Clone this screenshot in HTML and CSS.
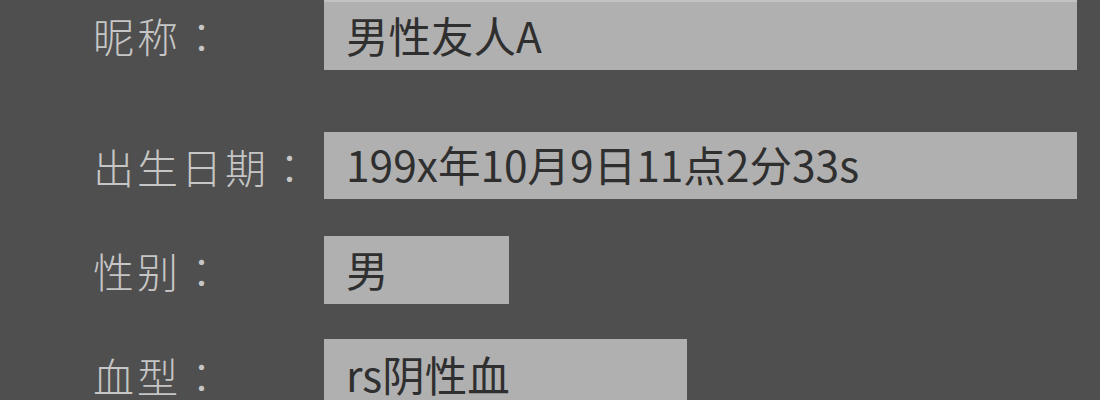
FILE: index.html
```
<!DOCTYPE html>
<html lang="zh-CN">
<head>
<meta charset="utf-8">
<title>个人资料</title>
<link rel="stylesheet" href="styles.css">
</head>
<body>
<div class="form">
  <div class="row row-nick">
    <div class="label">昵称<span class="colon" lang="zh-Hant">：</span></div>
    <div class="field field-wide">男性友人A</div>
  </div>
  <div class="row row-birth">
    <div class="label">出生日期<span class="colon" lang="zh-Hant">：</span></div>
    <div class="field field-wide">199x年10月9日11点2分33s</div>
  </div>
  <div class="row row-sex">
    <div class="label">性别<span class="colon" lang="zh-Hant">：</span></div>
    <div class="field field-short">男</div>
  </div>
  <div class="row row-blood">
    <div class="label">血型<span class="colon" lang="zh-Hant">：</span></div>
    <div class="field field-mid">rs阴性血</div>
  </div>
</div>
</body>
</html>
```
FILE: styles.css
```
html, body {
  margin: 0;
  padding: 0;
  background: #4f4f4f;
  overflow: hidden;
}
body {
  width: 1100px;
  height: 400px;
  font-family: "Noto Sans CJK SC", "Noto Sans", sans-serif;
}
.form {
  padding-left: 93px;
  display: flex;
  flex-direction: column;
}
.row {
  display: grid;
  grid-template-columns: 231px auto;
  align-items: center;
}
.row-nick { height: 70px; }
.row-birth { height: 67px; margin-top: 62px; }
.row-sex { height: 68px; margin-top: 37px; }
.row-blood { height: 72px; margin-top: 35px; }
.label {
  color: #c6c6c6;
  font-size: 41px;
  font-weight: 300;
  letter-spacing: 3px;
  line-height: 1;
  white-space: nowrap;
  padding-top: 1px;
}
.colon {
  font-family: "Noto Sans CJK TC", "Noto Sans CJK SC", sans-serif;
}
.field {
  height: 100%;
  box-sizing: border-box;
  background: #b0b0b0;
  color: #2f2f2f;
  font-size: 42.5px;
  line-height: 1;
  padding-left: 22px;
  padding-bottom: 2px;
  display: flex;
  align-items: center;
  white-space: nowrap;
}
.field-wide { width: 753px; }
.field-short { width: 185px; }
.field-mid { width: 363px; }
.row-nick .field { border-top: 2px solid #c2c2c2; }
```
